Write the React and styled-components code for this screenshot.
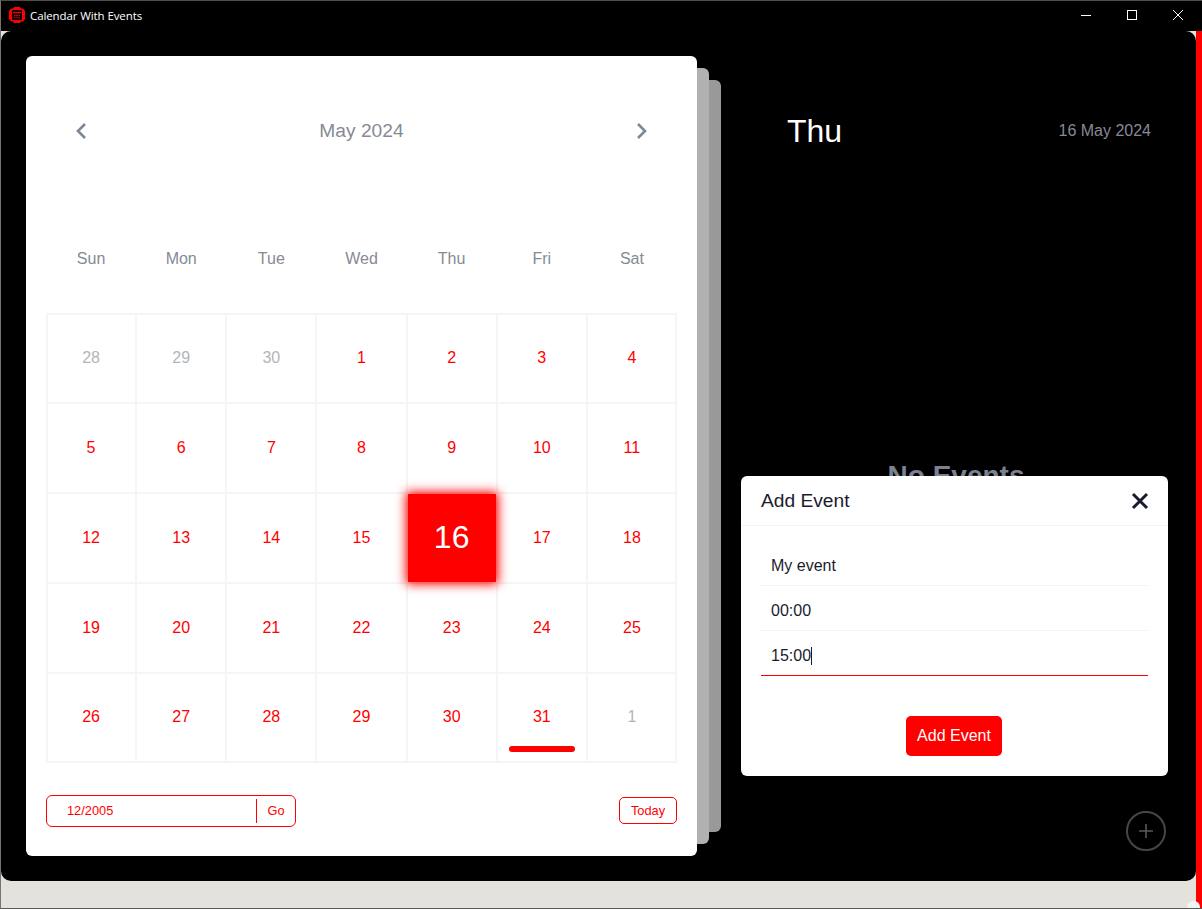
import React from 'react';
import styled, { createGlobalStyle } from 'styled-components';

const RED = '#ff0000';
const WEEKDAYS = ['Sun', 'Mon', 'Tue', 'Wed', 'Thu', 'Fri', 'Sat'];
const PREV_DAYS = [28, 29, 30];
const NEXT_DAYS = [1];
const MONTH_DAYS = Array.from({ length: 31 }, (_, i) => i + 1);

const GlobalStyle = createGlobalStyle`
	html, body {
		margin: 0;
		padding: 0;
		background: #000;
	}
	* {
		box-sizing: border-box;
	}
	body {
		font-family: "Liberation Sans", Arial, sans-serif;
	}
`;

const AppIcon = () => (
	<svg width="16" height="16" viewBox="0 0 16 16">
		<path d="M5 0h6l1 1.5h2L16 4v8l-2 2.5h-2L11 16H5l-1-1.5H2L0 12V4l2-2.500h2z" fill={RED} />
		<rect x="3" y="3" width="10" height="10" rx="1" fill="#1a0000" />
		<rect x="4" y="5" width="8" height="1" fill={RED} />
		<path d="M5 8h1.400v1H5zM7.300 8h1.400v1H7.300zM9.600 8h1.400v1H9.600zM5 10.200h1.400v1H5zM7.300 10.200h1.400v1H7.300zM9.600 10.200h1.400v1H9.600z" fill={RED} />
	</svg>
);

const Chevron = ({ dir }) => (
	<svg width="12" height="18" viewBox="0 0 12 18">
		<polyline
			points={dir === 'left' ? '10,2 3,9 10,16' : '2,2 9,9 2,16'}
			fill="none"
			stroke="#7d8896"
			strokeWidth="2.6"
		/>
	</svg>
);

const App = () => {
	return (
		<Window>
			<GlobalStyle />
			<TitleBar>
				<AppIcon />
				<TitleText>Calendar With Events</TitleText>
				<WindowControls>
					<ControlButton>
						<svg width="12" height="12" viewBox="0 0 12 12">
							<line x1="1" y1="6.500" x2="11" y2="6.500" stroke="#fff" strokeWidth="1" />
						</svg>
					</ControlButton>
					<ControlButton>
						<svg width="12" height="12" viewBox="0 0 12 12">
							<rect x="1.500" y="1.500" width="9" height="9" fill="none" stroke="#fff" strokeWidth="1" />
						</svg>
					</ControlButton>
					<ControlButton>
						<svg width="12" height="12" viewBox="0 0 12 12">
							<path d="M1 1l10 10M11 1L1 11" stroke="#fff" strokeWidth="1" />
						</svg>
					</ControlButton>
				</WindowControls>
			</TitleBar>

			<Content>
				<Main>
					<Card>
						<CalendarHeader>
							<Chevron dir="left" />
							<MonthLabel>May 2024</MonthLabel>
							<Chevron dir="right" />
						</CalendarHeader>

						<Weekdays>
							{WEEKDAYS.map((day) => (
								<Weekday key={day}>{day}</Weekday>
							))}
						</Weekdays>

						<DaysGrid>
							{PREV_DAYS.map((d) => (
								<DayCell key={`prev-${d}`} $muted>
									{d}
								</DayCell>
							))}
							{MONTH_DAYS.map((d) => (
								<DayCell key={d} $active={d === 16}>
									{d}
									{d === 31 && <EventBar />}
								</DayCell>
							))}
							{NEXT_DAYS.map((d) => (
								<DayCell key={`next-${d}`} $muted>
									{d}
								</DayCell>
							))}
						</DaysGrid>

						<CardFooter>
							<GotoBox>
								<GotoValue>12/2005</GotoValue>
								<GotoButton>Go</GotoButton>
							</GotoBox>
							<TodayButton>Today</TodayButton>
						</CardFooter>
					</Card>

					<EventsPanel>
						<PanelHeader>
							<DayName>Thu</DayName>
							<FullDate>16 May 2024</FullDate>
						</PanelHeader>
						<NoEvents>No Events</NoEvents>
						<AddCircle>
							<svg width="16" height="16" viewBox="0 0 16 16">
								<path d="M8 1v14M1 8h14" stroke="#55585e" strokeWidth="1.600" />
							</svg>
						</AddCircle>
						<Modal>
							<ModalHeader>
								<ModalTitle>Add Event</ModalTitle>
								<svg width="18" height="18" viewBox="0 0 18 18">
									<path d="M2 2l14 14M16 2L2 16" stroke="#1b1b2f" strokeWidth="3" />
								</svg>
							</ModalHeader>
							<ModalBody>
								<Field>My event</Field>
								<Field>00:00</Field>
								<Field $focused>
									15:00
									<Caret />
								</Field>
							</ModalBody>
							<ModalFooter>
								<SubmitButton>Add Event</SubmitButton>
							</ModalFooter>
						</Modal>
					</EventsPanel>
				</Main>
				<RedEdge />
				<CornerBlob />
			</Content>
		</Window>
	);
};

export default App;

const Window = styled.div`
	position: relative;
	width: 1202px;
	height: 909px;
	display: flex;
	flex-direction: column;
	overflow: hidden;
	border-top: 1px solid #4f4c4a;
	border-left: 1px solid #77736f;
	border-bottom: 1px solid #5c5a57;
`;

const TitleBar = styled.div`
	height: 30px;
	flex: none;
	display: flex;
	align-items: center;
	gap: 5px;
	padding: 0 1px 2px 8px;
	background: #000;
	color: #fff;
`;

const TitleText = styled.span`
	font-family: "Open Sans", "Noto Sans", sans-serif;
	font-size: 11.5px;
	letter-spacing: -0.1px;
	color: #fff;
`;

const WindowControls = styled.div`
	margin-left: auto;
	display: flex;
	height: 100%;
`;

const ControlButton = styled.div`
	width: 46px;
	height: 100%;
	display: flex;
	align-items: center;
	justify-content: center;
`;

const Content = styled.div`
	position: relative;
	flex: 1;
	display: flex;
	align-items: flex-start;
	background: #e3e2dd;
`;

const Main = styled.div`
	isolation: isolate;
	width: 1195px;
	height: 850px;
	flex: none;
	display: flex;
	padding: 25px 0 25px 25px;
	background: #000;
	border-radius: 10px;
`;

const Card = styled.div`
	position: relative;
	width: 671px;
	height: 800px;
	flex: none;
	display: flex;
	flex-direction: column;
	padding: 0 20px;
	background: #fff;
	border-radius: 6px;

	&::before,
	&::after {
		content: '';
		position: absolute;
		left: 0;
		z-index: -1;
		border-radius: 6px;
	}
	&::before {
		top: 12px;
		bottom: 12px;
		right: -12px;
		background: #b0b1b3;
		z-index: -1;
	}
	&::after {
		top: 24px;
		bottom: 24px;
		right: -24px;
		background: #999999;
		z-index: -2;
	}
`;

const CalendarHeader = styled.div`
	height: 150px;
	flex: none;
	display: flex;
	align-items: center;
	justify-content: space-between;
	padding: 0 29px;
`;

const MonthLabel = styled.div`
	font-size: 19.2px;
	color: #868a94;
`;

const Weekdays = styled.div`
	height: 106px;
	margin-bottom: 1px;
	flex: none;
	display: grid;
	grid-template-columns: repeat(7, 1fr);
	align-items: center;
`;

const Weekday = styled.div`
	text-align: center;
	font-size: 16px;
	color: #868a94;
`;

const DaysGrid = styled.div`
	position: relative;
	height: 450px;
	flex: none;
	display: grid;
	grid-template-columns: repeat(7, 1fr);
	grid-template-rows: repeat(4, 90px) 90px;

	&::after {
		content: '';
		position: absolute;
		inset: 0;
		border: 2px solid #f5f5f5;
		pointer-events: none;
	}
`;

const DayCell = styled.div`
	position: relative;
	display: flex;
	align-items: center;
	justify-content: center;
	border: 1px solid #f5f5f5;
	font-size: ${(p) => (p.$active ? '32px' : '16px')};
	color: ${(p) => (p.$active ? '#fff' : p.$muted ? '#b3b5ba' : RED)};

	&:nth-child(n + 29) {
		padding-bottom: 2px;
	}

	${(p) =>
		p.$active &&
		`
		z-index: 1;
		padding-bottom: 2px;
		background: ${RED};
		background-clip: padding-box;
		box-shadow: 0 0 10px 1px ${RED};
		border-color: transparent;
	`}
`;

const EventBar = styled.span`
	position: absolute;
	left: 11px;
	right: 11px;
	bottom: 10px;
	height: 6px;
	border-radius: 3px;
	background: ${RED};
`;

const CardFooter = styled.div`
	margin-top: 32px;
	height: 32px;
	flex: none;
	display: flex;
	align-items: flex-start;
	justify-content: space-between;
`;

const GotoBox = styled.div`
	width: 250px;
	height: 32px;
	display: flex;
	align-items: center;
	border: 1px solid ${RED};
	border-radius: 6px;
	font-size: 12.8px;
	color: ${RED};
`;

const GotoValue = styled.div`
	flex: 1;
	padding: 0 0 1px 20px;
`;

const GotoButton = styled.div`
	width: 39px;
	height: 24px;
	display: flex;
	align-items: center;
	justify-content: center;
	padding-bottom: 1px;
	border-left: 1px solid ${RED};
`;

const TodayButton = styled.div`
	width: 58px;
	height: 27px;
	margin-top: 2px;
	display: flex;
	align-items: center;
	justify-content: center;
	border: 1px solid ${RED};
	border-radius: 5px;
	font-size: 12.8px;
	color: ${RED};
`;

const EventsPanel = styled.div`
	position: relative;
	flex: 1;
	display: flex;
	flex-direction: column;
	align-items: center;
`;

const PanelHeader = styled.div`
	width: 100%;
	height: 150px;
	display: flex;
	align-items: center;
	justify-content: space-between;
	padding: 0 45px 0 90px;
`;

const DayName = styled.div`
	font-size: 32px;
	color: #fff;
`;

const FullDate = styled.div`
	font-size: 16px;
	color: #868a94;
`;

const NoEvents = styled.div`
	margin-top: 254px;
	margin-left: 19px;
	font-size: 28px;
	font-weight: bold;
	color: #7b8190;
`;

const AddCircle = styled.div`
	position: absolute;
	right: 30px;
	bottom: 5px;
	width: 40px;
	height: 40px;
	display: flex;
	align-items: center;
	justify-content: center;
	border: 2px solid #44464b;
	border-radius: 50%;
`;

const Modal = styled.div`
	position: absolute;
	left: 44px;
	top: 420px;
	width: 427px;
	height: 300px;
	display: flex;
	flex-direction: column;
	background: #fff;
	border-radius: 6px;
`;

const ModalHeader = styled.div`
	height: 50px;
	flex: none;
	display: flex;
	align-items: center;
	justify-content: space-between;
	padding: 0 19px 0 20px;
	border-bottom: 1px solid #f3f3f3;
`;

const ModalTitle = styled.div`
	font-size: 19.2px;
	color: #1b1b2f;
`;

const ModalBody = styled.div`
	padding: 15px 20px 0;
`;

const Field = styled.div`
	height: 45px;
	display: flex;
	align-items: center;
	padding: 6px 10px 0;
	font-size: 16px;
	color: #1b1b2f;
	border-bottom: 1px solid ${(p) => (p.$focused ? RED : '#f3f3f3')};
`;

const Caret = styled.span`
	width: 1px;
	height: 18px;
	background: #1b1b2f;
`;

const ModalFooter = styled.div`
	margin-top: 40px;
	padding-right: 1px;
	display: flex;
	justify-content: center;
`;

const SubmitButton = styled.div`
	width: 96px;
	height: 40px;
	display: flex;
	align-items: center;
	justify-content: center;
	background: ${RED};
	border-radius: 5px;
	font-size: 16px;
	color: #fff;
`;

const RedEdge = styled.div`
	width: 6px;
	align-self: stretch;
	flex: none;
	background: ${RED};
`;

const CornerBlob = styled.div`
	position: absolute;
	right: 2px;
	bottom: 0;
	width: 13px;
	height: 7px;
	background: #f4f3f0;
	border-radius: 6px 6px 0 0;
`;
